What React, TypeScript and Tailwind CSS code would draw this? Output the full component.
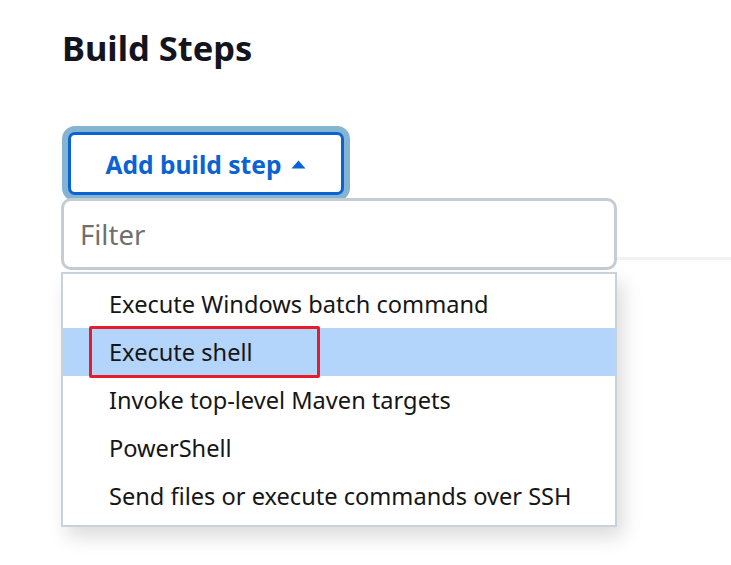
const steps = [
  'Execute Windows batch command',
  'Execute shell',
  'Invoke top-level Maven targets',
  'PowerShell',
  'Send files or execute commands over SSH',
];

const App = () => (
  <div className="min-h-[565px] bg-white font-['Noto_Sans',sans-serif] text-[#14141f]">
    <div className="pt-[24px]">
      <h1 className="pl-[62px] text-[34.5px] font-bold leading-[48px]">Build Steps</h1>

      <div className="relative mt-[60px] pl-[68px]">
        <button className="flex h-[63px] w-[276px] items-center justify-center gap-[10px] rounded-[7px] border-[3px] border-[#0b62d3] bg-white pt-[4px] text-[24.6px] font-bold text-[#0b62d3] ring-[6px] ring-[#85b4d3]">
          <span>Add build step</span>
          <svg width="15" height="9" viewBox="0 0 15 9" fill="currentColor" className="mb-[3px]">
            <path d="M7.5 0.5 L14.5 8.5 L0.5 8.5 Z" />
          </svg>
        </button>

        <div className="absolute left-[61px] top-[66px] z-10 w-[556px]">
          <div className="flex h-[72px] items-center rounded-[10px] border-[3px] border-[#c4cdd3] bg-white pl-[16px] pt-[1px]">
            <span className="text-[27.5px] text-[#6f6f6f]">Filter</span>
          </div>
          <ul className="mt-[2px] border-2 border-[#c9d2d8] bg-white pb-[5px] pt-[6px] shadow-[6px_10px_18px_rgba(0,0,0,0.14)]">
            {steps.map((s, i) => (
              <li
                key={s}
                className={`relative flex h-[48px] items-center pl-[46px] pt-[2px] text-[23.6px] text-[#161616] ${i === 1 ? 'bg-[#b3d4fb]' : ''}`}
              >
                {s}
                {i === 1 && (
                  <div className="absolute left-[26px] top-[-2px] h-[52px] w-[231px] rounded-[2px] border-[3px] border-[#e81b2b]" />
                )}
              </li>
            ))}
          </ul>
        </div>
      </div>

      <div className="ml-[62px] mt-[62px] h-[3px] bg-[#f1f1f6]" />
    </div>
  </div>
);

export default App;
